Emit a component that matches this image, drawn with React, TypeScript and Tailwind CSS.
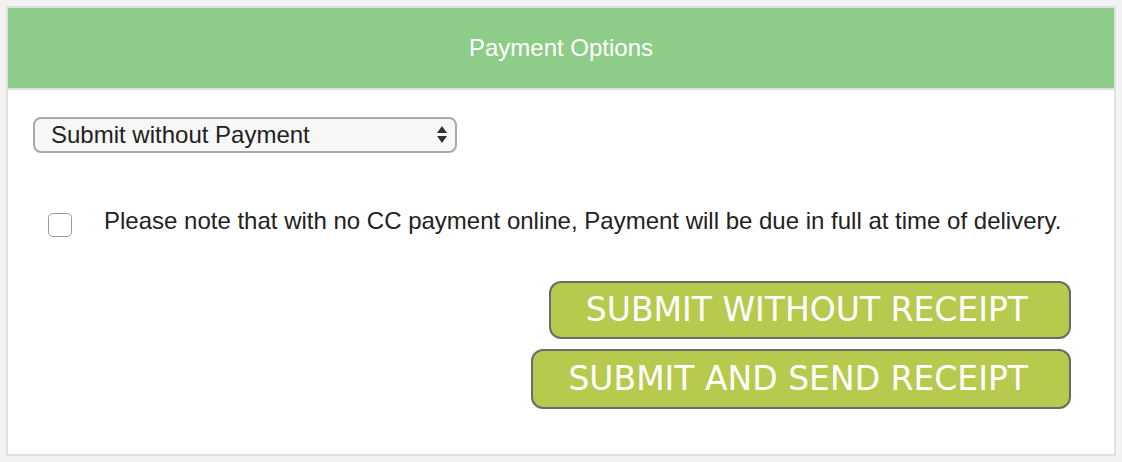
import { useState } from 'react'

export default function App() {
  const [agreed, setAgreed] = useState(false)
  const [method, setMethod] = useState('none')

  return (
    <div className="min-h-screen bg-[#f2f2f2] p-[6px] font-['Liberation_Sans',Arial,sans-serif]">
      <div className="h-[450px] border-2 border-[#e0e0e0] bg-white">
        {/* Header */}
        <div className="flex h-[82px] items-center justify-center border-b-2 border-[#e0e0e0] bg-[#8ecc89]">
          <h1 className="text-[24px] leading-[28px] text-white">Payment Options</h1>
        </div>

        <div className="pl-[25px] pr-[43px] pt-[27px]">
          <div className="relative w-[424px]">
            <select
              value={method}
              onChange={(e) => setMethod(e.target.value)}
              className="h-[36px] w-full appearance-none rounded-[8px] border-2 border-[#a9a9a9] bg-[#f7f7f7] pl-[16px] text-[24px] leading-[28px] text-[#222] outline-none"
            >
              <option value="none">Submit without Payment</option>
              <option value="cc">Pay with Credit Card</option>
            </select>
            <svg className="pointer-events-none absolute right-[10px] top-[9px]" width="10" height="17" viewBox="0 0 10 17">
              <path d="M5 0 L10 7 H0 Z" fill="#333" />
              <path d="M0 10 H10 L5 17 Z" fill="#333" />
            </svg>
          </div>

          <label className="mt-[56px] flex items-start">
            <input
              type="checkbox"
              checked={agreed}
              onChange={(e) => setAgreed(e.target.checked)}
              className="ml-[15px] mt-[4px] h-[24px] w-[24px] shrink-0 appearance-none rounded-[5px] border border-[#9a9a9a] bg-white checked:bg-[#8ecc89]"
            />
            <span className="ml-[32px] text-[24px] leading-[24px] text-[#222]">
              Please note that with no CC payment online, Payment will be due in full at time of delivery.
            </span>
          </label>

          <div className="mt-[44px] flex flex-col items-end gap-[10px]">
            <button className="h-[58px] rounded-[12px] border-2 border-[#6b6b6b] bg-[#b7ca4e] pl-[35px] pr-[41px] font-['DejaVu_Sans',sans-serif] text-[33px] leading-[40px] text-white">
              SUBMIT WITHOUT RECEIPT
            </button>
            <button className="h-[60px] rounded-[12px] border-2 border-[#6b6b6b] bg-[#b7ca4e] pl-[35px] pr-[41px] font-['DejaVu_Sans',sans-serif] text-[33px] leading-[40px] text-white">
              SUBMIT AND SEND RECEIPT
            </button>
          </div>
        </div>
      </div>
    </div>
  )
}
